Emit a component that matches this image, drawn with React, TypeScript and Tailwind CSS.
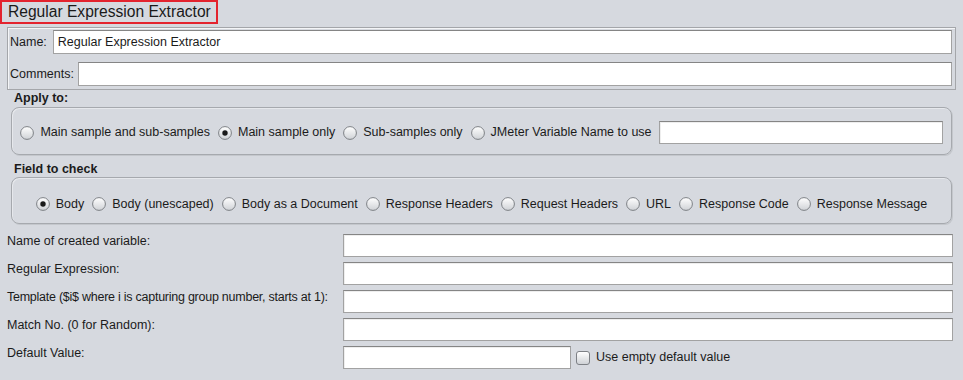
import React from "react";

function Radio({ checked }: { checked?: boolean }) {
  return (
    <svg width="14" height="14" viewBox="0 0 14 14" className="shrink-0">
      <defs>
        <linearGradient id={checked ? "rgc" : "rg"} x1="0" y1="0" x2="0" y2="1">
          <stop offset="0" stopColor="#ffffff" />
          <stop offset="1" stopColor="#cfd2d6" />
        </linearGradient>
      </defs>
      <circle cx="7" cy="7" r="6.4" fill={`url(#${checked ? "rgc" : "rg"})`} stroke="#7d8085" strokeWidth="1" />
      {checked && <circle cx="7" cy="7" r="2.7" fill="#1a1a1a" />}
    </svg>
  );
}

function RadioItem({ label, checked }: { label: string; checked?: boolean }) {
  return (
    <div className="flex items-center">
      <Radio checked={checked} />
      <span className="ml-[6px] whitespace-nowrap">{label}</span>
    </div>
  );
}

function Input({ className = "" }: { className?: string }) {
  return (
    <div
      className={`h-[23px] bg-white border border-[#a2a2a2] border-t-[#858585] shadow-[inset_1px_1px_0_#eeeeee] ${className}`}
    />
  );
}

export default function App() {
  return (
    <div
      className="w-[963px] h-[380px] bg-[#d6d9df] text-[12.5px] text-[#1b1b1b] overflow-hidden"
      style={{ fontFamily: '"Liberation Sans", Arial, sans-serif' }}
    >
      {/* Title */}
      <div className="h-[27px]">
        <div className="inline-flex items-center w-[218px] h-[24px] border-2 border-[#e3232e] pl-[6px] text-[15.6px] leading-[18px] text-[#1a1a1a] whitespace-nowrap">
          Regular Expression Extractor
        </div>
      </div>

      {/* Name / Comments */}
      <div className="mx-[7px] h-[63px] border border-[#a4a6aa] shadow-[inset_1px_1px_0_#f4f5f7] pt-[2px] pl-[2px] pr-[3px] flex flex-col gap-[8px]">
        <div className="flex items-center gap-[6px]">
          <span className="whitespace-nowrap">Name:</span>
          <div className="flex-1 h-[24px] bg-white border border-[#a2a2a2] border-t-[#858585] flex items-center pl-[4px] whitespace-nowrap">
            Regular Expression Extractor
          </div>
        </div>
        <div className="flex items-center gap-[4px]">
          <span className="whitespace-nowrap">Comments:</span>
          <div className="flex-1 h-[24px] bg-white border border-[#a2a2a2] border-t-[#858585]" />
        </div>
      </div>

      {/* Apply to */}
      <div className="h-[17px] pl-[14px] leading-[16px] font-bold">Apply to:</div>
      <div className="mx-[11px] h-[48px] border border-[#a6a9ae] rounded-[8px] shadow-[inset_1px_1px_0_#e6e8ec,1px_1px_0_#c4c7cc] pt-[3px] flex items-center justify-center gap-[8px]">
        <RadioItem label="Main sample and sub-samples" />
        <RadioItem label="Main sample only" checked />
        <RadioItem label="Sub-samples only" />
        <RadioItem label="JMeter Variable Name to use" />
        <Input className="w-[284px] ml-[-1px]" />
      </div>

      {/* Field to check */}
      <div className="h-[22px] pt-[7px] pl-[14px] leading-[15px] font-bold">Field to check</div>
      <div className="mx-[11px] h-[47px] border border-[#a6a9ae] rounded-[8px] shadow-[inset_1px_1px_0_#e6e8ec,1px_1px_0_#c4c7cc] pt-[7px] flex items-center justify-center gap-[8px]">
        <RadioItem label="Body" checked />
        <RadioItem label="Body (unescaped)" />
        <RadioItem label="Body as a Document" />
        <RadioItem label="Response Headers" />
        <RadioItem label="Request Headers" />
        <RadioItem label="URL" />
        <RadioItem label="Response Code" />
        <RadioItem label="Response Message" />
      </div>

      {/* Form rows */}
      <div className="mt-[10px] pl-[7px] pr-[10px] grid grid-cols-[336px_1fr] gap-y-[5px] items-start">
        <span className="whitespace-nowrap leading-[14px]">Name of created variable:</span>
        <Input />
        <span className="whitespace-nowrap leading-[14px]">Regular Expression:</span>
        <Input />
        <span className="whitespace-nowrap leading-[14px] tracking-[-0.25px]">Template ($i$ where i is capturing group number, starts at 1):</span>
        <Input />
        <span className="whitespace-nowrap leading-[14px]">Match No. (0 for Random):</span>
        <Input />
        <span className="whitespace-nowrap leading-[14px]">Default Value:</span>
        <div className="flex items-center">
          <Input className="w-[228px]" />
          <div className="ml-[5px] w-[14px] h-[14px] rounded-[3px] border border-[#7d8085] bg-gradient-to-b from-white to-[#cfd2d6]" />
          <span className="ml-[6px] whitespace-nowrap">Use empty default value</span>
        </div>
      </div>
    </div>
  );
}
